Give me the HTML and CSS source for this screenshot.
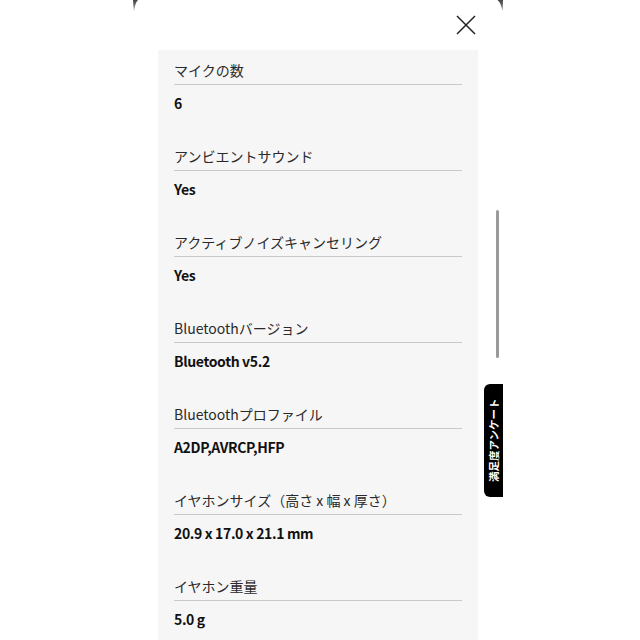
FILE: index.html
```html
<!DOCTYPE html>
<html lang="ja">
<head>
<meta charset="utf-8">
<title>仕様</title>
<link rel="stylesheet" href="styles.css">
</head>
<body>
<div class="screen">
  <svg class="bezel bezel-left" width="7" height="12" viewBox="0 0 7 12"><defs><linearGradient id="gl" x1="0" y1="0" x2="0" y2="1"><stop offset="0" stop-color="#444"/><stop offset="1" stop-color="#999"/></linearGradient></defs><path d="M1 0 L6 0 Q3 3 2 11 Q1.2 5 1 0 Z" fill="url(#gl)"/></svg>
  <svg class="bezel bezel-right" width="7" height="12" viewBox="0 0 7 12"><defs><linearGradient id="gr" x1="0" y1="0" x2="0" y2="1"><stop offset="0" stop-color="#444"/><stop offset="1" stop-color="#999"/></linearGradient></defs><path d="M0.5 0 L6 0 Q6 6 5.5 11 Q4 3 0.5 0 Z" fill="url(#gr)"/></svg>

  <header class="topbar">
    <button class="close" aria-label="閉じる">
      <svg width="20" height="20" viewBox="0 0 20 20"><path d="M1 1 L19 19 M19 1 L1 19" stroke="#222" stroke-width="1.5" fill="none"/></svg>
    </button>
  </header>

  <main class="panel">
    <div class="row"><div class="label">マイクの数</div><div class="value">6</div></div>
    <div class="row"><div class="label">アンビエントサウンド</div><div class="value">Yes</div></div>
    <div class="row"><div class="label">アクティブノイズキャンセリング</div><div class="value">Yes</div></div>
    <div class="row"><div class="label">Bluetoothバージョン</div><div class="value">Bluetooth v5.2</div></div>
    <div class="row"><div class="label">Bluetoothプロファイル</div><div class="value">A2DP,AVRCP,HFP</div></div>
    <div class="row"><div class="label">イヤホンサイズ（高さ x 幅 x 厚さ）</div><div class="value">20.9 x 17.0 x 21.1 mm</div></div>
    <div class="row"><div class="label">イヤホン重量</div><div class="value">5.0 g</div></div>
  </main>

  <div class="scrollbar"></div>
  <div class="survey-tab"><span>満足度アンケート</span></div>
</div>
</body>
</html>
```
FILE: styles.css
```css
html, body {
  margin: 0;
  padding: 0;
  background: #ffffff;
}
.screen {
  position: relative;
  width: 640px;
  height: 640px;
  overflow: hidden;
  font-family: "Noto Sans CJK JP", "Noto Sans", sans-serif;
  color: #111;
}
.bezel {
  position: absolute;
  top: 0;
}
.bezel-left { left: 132px; }
.bezel-right { left: 497px; }
.topbar {
  height: 50px;
  display: flex;
  justify-content: flex-end;
  align-items: flex-start;
  padding-right: 164px;
}
.close {
  margin-top: 15px;
  padding: 0;
  border: 0;
  background: transparent;
  width: 20px;
  height: 20px;
  cursor: pointer;
}
.close svg { display: block; }
.panel {
  margin-left: 158px;
  width: 288px;
  padding: 10px 16px 0;
  background: #f6f6f6;
  min-height: 600px;
}
.row {
  padding-bottom: 33px;
}
.label {
  font-size: 14px;
  line-height: 20px;
  font-weight: 400;
  color: #2a2a2a;
  padding-bottom: 4px;
  border-bottom: 1.5px solid #c9c9c9;
}
.value {
  margin-top: 8px;
  font-size: 14px;
  line-height: 20px;
  font-weight: 700;
  letter-spacing: -0.35px;
  color: #111;
}
.scrollbar {
  position: absolute;
  left: 496px;
  top: 210px;
  width: 3px;
  height: 148px;
  border-radius: 2px;
  background: #9a9a9a;
}
.survey-tab {
  position: absolute;
  left: 484px;
  top: 384px;
  width: 19px;
  height: 113px;
  background: #000;
  border-radius: 6px 0 0 6px;
  display: flex;
  align-items: center;
  justify-content: center;
}
.survey-tab span {
  transform: rotate(-90deg);
  white-space: nowrap;
  color: #fff;
  font-size: 10.5px;
  font-weight: 700;
  line-height: 1;
}
```
